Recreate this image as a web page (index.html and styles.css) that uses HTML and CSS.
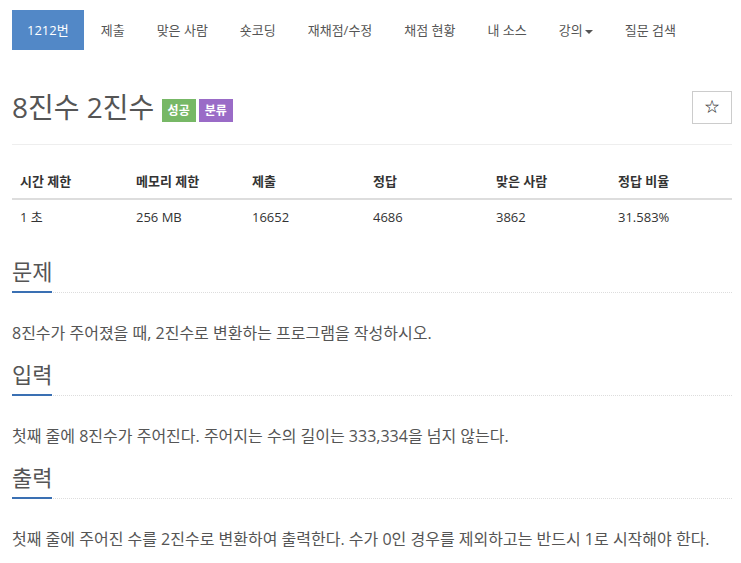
FILE: index.html
```html
<!DOCTYPE html>
<html lang="ko">
<head>
  <meta charset="UTF-8">
  <title>1212번: 8진수 2진수</title>
  <link rel="stylesheet" href="styles.css">
</head>
<body>
<div class="wrap">
  <ul class="nav">
    <li class="active"><a href="#">1212번</a></li>
    <li><a href="#">제출</a></li>
    <li><a href="#">맞은 사람</a></li>
    <li><a href="#">숏코딩</a></li>
    <li><a href="#">재채점/수정</a></li>
    <li><a href="#">채점 현황</a></li>
    <li><a href="#">내 소스</a></li>
    <li><a href="#">강의<span class="caret"></span></a></li>
    <li><a href="#">질문 검색</a></li>
  </ul>

  <div class="page-header">
    <h1>8진수 2진수 <span class="label label-success">성공</span><span class="label label-purple">분류</span></h1>
    <button class="star-btn">☆</button>
  </div>

  <table class="info">
    <thead>
      <tr>
        <th class="c1">시간 제한</th>
        <th class="c2">메모리 제한</th>
        <th class="c3">제출</th>
        <th class="c4">정답</th>
        <th class="c5">맞은 사람</th>
        <th class="c6">정답 비율</th>
      </tr>
    </thead>
    <tbody>
      <tr>
        <td>1 초</td>
        <td>256 MB</td>
        <td>16652</td>
        <td>4686</td>
        <td>3862</td>
        <td>31.583%</td>
      </tr>
    </tbody>
  </table>

  <section class="problem-section">
    <div class="headline"><h2>문제</h2></div>
    <p>8진수가 주어졌을 때, 2진수로 변환하는 프로그램을 작성하시오.</p>
  </section>

  <section class="problem-section">
    <div class="headline"><h2>입력</h2></div>
    <p>첫째 줄에 8진수가 주어진다. 주어지는 수의 길이는 333,334을 넘지 않는다.</p>
  </section>

  <section class="problem-section">
    <div class="headline"><h2>출력</h2></div>
    <p>첫째 줄에 주어진 수를 2진수로 변환하여 출력한다. 수가 0인 경우를 제외하고는 반드시 1로 시작해야 한다.</p>
  </section>
</div>
</body>
</html>
```

FILE: styles.css
```css
body {
  margin: 0;
  font-family: "Open Sans", "Noto Sans CJK KR", sans-serif;
  color: #333;
  background: #fff;
}

.wrap {
  padding: 10px 9px 0 12px;
}

/* 상단 탭 */
.nav {
  display: flex;
  list-style: none;
  margin: 0;
  padding: 0;
}

.nav li {
  margin-right: 2px;
}

.nav a {
  display: block;
  padding: 0 15px;
  line-height: 40px;
  font-size: 13px;
  color: #555;
  text-decoration: none;
}

.nav .active a {
  background-color: #5288c7;
  color: #fff;
}

.caret {
  display: inline-block;
  width: 0;
  height: 0;
  margin-left: 2px;
  vertical-align: middle;
  border-top: 4px solid #555;
  border-left: 4px solid transparent;
  border-right: 4px solid transparent;
}

/* 제목 */
.page-header {
  display: flex;
  justify-content: space-between;
  align-items: center;
  margin-top: 40px;
  padding-bottom: 20px;
  border-bottom: 1px solid #eee;
}

.page-header h1 {
  margin: 0;
  font-size: 28px;
  font-weight: 400;
  color: #555;
  line-height: 34px;
}

.label {
  display: inline-block;
  vertical-align: 3px;
  padding: 0 6px;
  margin-right: 3px;
  font-size: 12px;
  font-weight: bold;
  line-height: 23px;
  color: #fff;
}

.label-success {
  background-color: #77b866;
}

.label-purple {
  background-color: #9a6bc7;
}

.star-btn {
  width: 40px;
  height: 33px;
  border: 1px solid #ccc;
  background: #fff;
  font-size: 16px;
  color: #333;
  padding: 0;
}

/* 정보 표 */
.info {
  width: 100%;
  margin-top: 19px;
  border-collapse: collapse;
  table-layout: fixed;
  font-size: 13px;
}

.info th, .info td {
  box-sizing: border-box;
  text-align: left;
  padding: 8px;
  line-height: 18px;
}

.info th {
  font-weight: bold;
  border-bottom: 2px solid #ddd;
}

.c1, .c2 { width: 116px; }
.c3 { width: 121px; }
.c4 { width: 123px; }
.c5, .c6 { width: 122px; }

/* 문제 본문 */
.problem-section {
  margin-top: 14px;
}

.info + .problem-section {
  margin-top: 22px;
}

.headline {
  border-bottom: 1px dotted #ddd;
}

.headline h2 {
  display: inline-block;
  margin: 0 0 -1px;
  padding-bottom: 5px;
  font-size: 22px;
  font-weight: 400;
  line-height: 30px;
  color: #555;
  border-bottom: 2px solid #3a70b3;
}

.problem-section p {
  margin: 28px 0 0;
  font-size: 16px;
  line-height: 24px;
  color: #555;
}
```
